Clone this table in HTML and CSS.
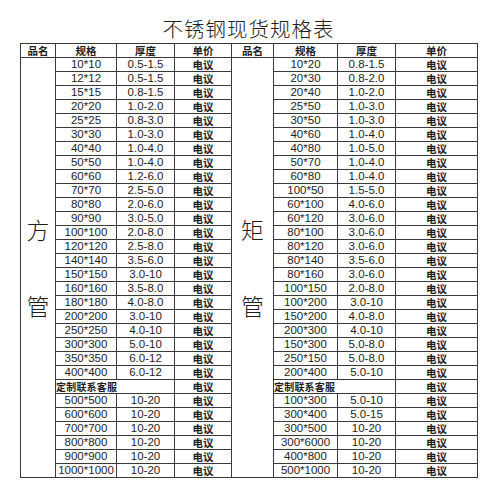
FILE: index.html
```html
<!DOCTYPE html>
<html lang="zh">
<head>
<meta charset="utf-8">
<title>不锈钢现货规格表</title>
<link rel="stylesheet" href="styles.css">
</head>
<body>
<div class="page">
  <h1 class="title">不锈钢现货规格表</h1>
  <table class="spec">
    <colgroup>
      <col class="c-name"><col class="c-size"><col class="c-thick"><col class="c-price">
      <col class="c-name2"><col class="c-size2"><col class="c-thick2"><col class="c-price2">
    </colgroup>
    <thead>
      <tr><th>品名</th><th>规格</th><th>厚度</th><th>单价</th><th>品名</th><th>规格</th><th>厚度</th><th>单价</th></tr>
    </thead>
    <tbody>
      <tr>
        <td class="kind" rowspan="30"><div class="kind-in"><span>方</span><span>管</span></div></td>
        <td>10*10</td><td>0.5-1.5</td><td class="p">电议</td>
        <td class="kind" rowspan="30"><div class="kind-in"><span>矩</span><span>管</span></div></td>
        <td>10*20</td><td>0.8-1.5</td><td class="p">电议</td>
      </tr>
      <tr><td>12*12</td><td>0.5-1.5</td><td class="p">电议</td><td>20*30</td><td>0.8-2.0</td><td class="p">电议</td></tr>
      <tr><td>15*15</td><td>0.8-1.5</td><td class="p">电议</td><td>20*40</td><td>1.0-2.0</td><td class="p">电议</td></tr>
      <tr><td>20*20</td><td>1.0-2.0</td><td class="p">电议</td><td>25*50</td><td>1.0-3.0</td><td class="p">电议</td></tr>
      <tr><td>25*25</td><td>0.8-3.0</td><td class="p">电议</td><td>30*50</td><td>1.0-3.0</td><td class="p">电议</td></tr>
      <tr><td>30*30</td><td>1.0-3.0</td><td class="p">电议</td><td>40*60</td><td>1.0-4.0</td><td class="p">电议</td></tr>
      <tr><td>40*40</td><td>1.0-4.0</td><td class="p">电议</td><td>40*80</td><td>1.0-5.0</td><td class="p">电议</td></tr>
      <tr><td>50*50</td><td>1.0-4.0</td><td class="p">电议</td><td>50*70</td><td>1.0-4.0</td><td class="p">电议</td></tr>
      <tr><td>60*60</td><td>1.2-6.0</td><td class="p">电议</td><td>60*80</td><td>1.0-4.0</td><td class="p">电议</td></tr>
      <tr><td>70*70</td><td>2.5-5.0</td><td class="p">电议</td><td>100*50</td><td>1.5-5.0</td><td class="p">电议</td></tr>
      <tr><td>80*80</td><td>2.0-6.0</td><td class="p">电议</td><td>60*100</td><td>4.0-6.0</td><td class="p">电议</td></tr>
      <tr><td>90*90</td><td>3.0-5.0</td><td class="p">电议</td><td>60*120</td><td>3.0-6.0</td><td class="p">电议</td></tr>
      <tr><td>100*100</td><td>2.0-8.0</td><td class="p">电议</td><td>80*100</td><td>3.0-6.0</td><td class="p">电议</td></tr>
      <tr><td>120*120</td><td>2.5-8.0</td><td class="p">电议</td><td>80*120</td><td>3.0-6.0</td><td class="p">电议</td></tr>
      <tr><td>140*140</td><td>3.5-6.0</td><td class="p">电议</td><td>80*140</td><td>3.5-6.0</td><td class="p">电议</td></tr>
      <tr><td>150*150</td><td>3.0-10</td><td class="p">电议</td><td>80*160</td><td>3.0-6.0</td><td class="p">电议</td></tr>
      <tr><td>160*160</td><td>3.5-8.0</td><td class="p">电议</td><td>100*150</td><td>2.0-8.0</td><td class="p">电议</td></tr>
      <tr><td>180*180</td><td>4.0-8.0</td><td class="p">电议</td><td>100*200</td><td>3.0-10</td><td class="p">电议</td></tr>
      <tr><td>200*200</td><td>3.0-10</td><td class="p">电议</td><td>150*200</td><td>4.0-8.0</td><td class="p">电议</td></tr>
      <tr><td>250*250</td><td>4.0-10</td><td class="p">电议</td><td>200*300</td><td>4.0-10</td><td class="p">电议</td></tr>
      <tr><td>300*300</td><td>5.0-10</td><td class="p">电议</td><td>150*300</td><td>5.0-8.0</td><td class="p">电议</td></tr>
      <tr><td>350*350</td><td>6.0-12</td><td class="p">电议</td><td>250*150</td><td>5.0-8.0</td><td class="p">电议</td></tr>
      <tr><td>400*400</td><td>6.0-12</td><td class="p">电议</td><td>200*400</td><td>5.0-10</td><td class="p">电议</td></tr>
      <tr><td class="custom" colspan="2">定制联系客服</td><td class="p">电议</td><td class="custom" colspan="2">定制联系客服</td><td class="p">电议</td></tr>
      <tr><td>500*500</td><td>10-20</td><td class="p">电议</td><td>100*300</td><td>5.0-10</td><td class="p">电议</td></tr>
      <tr><td>600*600</td><td>10-20</td><td class="p">电议</td><td>300*400</td><td>5.0-15</td><td class="p">电议</td></tr>
      <tr><td>700*700</td><td>10-20</td><td class="p">电议</td><td>300*500</td><td>10-20</td><td class="p">电议</td></tr>
      <tr><td>800*800</td><td>10-20</td><td class="p">电议</td><td>300*6000</td><td>10-20</td><td class="p">电议</td></tr>
      <tr><td>900*900</td><td>10-20</td><td class="p">电议</td><td>400*800</td><td>10-20</td><td class="p">电议</td></tr>
      <tr><td>1000*1000</td><td>10-20</td><td class="p">电议</td><td>500*1000</td><td>10-20</td><td class="p">电议</td></tr>
    </tbody>
  </table>
</div>
</body>
</html>
```

FILE: styles.css
```css
html, body {
  margin: 0;
  padding: 0;
  background: #fff;
}

body {
  font-family: "Liberation Sans", "Noto Sans CJK SC", sans-serif;
  color: #1e1e1e;
}

.page {
  width: 500px;
  height: 500px;
  overflow: hidden;
}

.title {
  margin: 0 0 0 20px;
  width: 457px;
  height: 30px;
  padding-top: 13px;
  line-height: 30px;
  text-align: center;
  font-family: "Noto Sans CJK SC", sans-serif;
  font-weight: 200;
  font-size: 20.5px;
  letter-spacing: 1px;
  color: #222;
}

.spec {
  margin-left: 20px;
  width: 457px;
  border-collapse: collapse;
  table-layout: fixed;
}

.c-name { width: 35px; }
.c-size { width: 61px; }
.c-thick { width: 58px; }
.c-price { width: 57px; }
.c-name2 { width: 42px; }
.c-size2 { width: 64px; }
.c-thick2 { width: 58px; }
.c-price2 { width: 82px; }

.spec tr {
  height: 14px;
}

.spec th,
.spec td {
  border: 1px solid #3a3a3a;
  padding: 0;
  height: 13px;
  line-height: 13px;
  font-size: 11.5px;
  text-align: center;
  white-space: nowrap;
  overflow: hidden;
}

.spec th {
  font-family: "Noto Sans CJK SC", sans-serif;
  font-weight: 700;
  font-size: 10.5px;
}

.spec td.p {
  font-family: "Noto Sans CJK SC", sans-serif;
  font-weight: 700;
  font-size: 10.5px;
}

.spec td.custom {
  text-align: left;
  font-family: "Noto Sans CJK SC", sans-serif;
  font-weight: 700;
  font-size: 10px;
  letter-spacing: 0.2px;
}

.spec td.kind {
  vertical-align: middle;
  font-family: "Noto Sans CJK SC", sans-serif;
  font-weight: 200;
  font-size: 23px;
}

.kind-in {
  display: flex;
  flex-direction: column;
  align-items: center;
  gap: 53px;
  line-height: 23px;
}
```
